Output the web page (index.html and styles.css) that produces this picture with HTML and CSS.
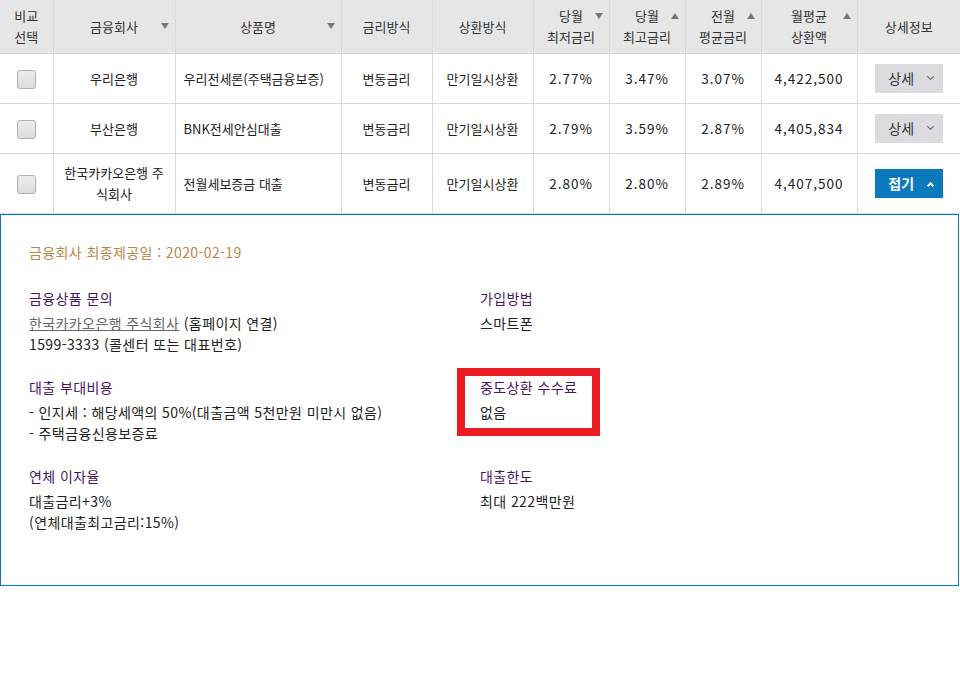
FILE: index.html
```html
<!DOCTYPE html>
<html lang="ko">
<head>
<meta charset="utf-8">
<title>대출 상품 비교</title>
<link rel="stylesheet" href="styles.css">
</head>
<body>
<table class="grid">
  <colgroup>
    <col style="width:53px"><col style="width:122px"><col style="width:166px"><col style="width:91px"><col style="width:101px"><col style="width:76px"><col style="width:76px"><col style="width:76px"><col style="width:96px"><col style="width:103px">
  </colgroup>
  <thead>
    <tr>
      <th>비교<br>선택</th>
      <th class="sortable">금융회사<span class="sort down one"></span></th>
      <th class="sortable">상품명<span class="sort down one"></span></th>
      <th>금리방식</th>
      <th>상환방식</th>
      <th class="sortable">당월<br>최저금리<span class="sort down two"></span></th>
      <th class="sortable">당월<br>최고금리<span class="sort up two"></span></th>
      <th class="sortable">전월<br>평균금리<span class="sort up two"></span></th>
      <th class="sortable">월평균<br>상환액<span class="sort up two"></span></th>
      <th>상세정보</th>
    </tr>
  </thead>
  <tbody>
    <tr class="r1">
      <td><span class="check"></span></td>
      <td>우리은행</td>
      <td class="left">우리전세론(주택금융보증)</td>
      <td>변동금리</td>
      <td>만기일시상환</td>
      <td class="num">2.77%</td>
      <td class="num">3.47%</td>
      <td class="num">3.07%</td>
      <td class="num">4,422,500</td>
      <td><span class="btn">상세<span class="chev"></span></span></td>
    </tr>
    <tr class="r1">
      <td><span class="check"></span></td>
      <td>부산은행</td>
      <td class="left">BNK전세안심대출</td>
      <td>변동금리</td>
      <td>만기일시상환</td>
      <td class="num">2.79%</td>
      <td class="num">3.59%</td>
      <td class="num">2.87%</td>
      <td class="num">4,405,834</td>
      <td><span class="btn">상세<span class="chev"></span></span></td>
    </tr>
    <tr class="r3">
      <td><span class="check"></span></td>
      <td class="wrap">한국카카오은행 주식회사</td>
      <td class="left">전월세보증금 대출</td>
      <td>변동금리</td>
      <td>만기일시상환</td>
      <td class="num">2.80%</td>
      <td class="num">2.80%</td>
      <td class="num">2.89%</td>
      <td class="num">4,407,500</td>
      <td><span class="btn open">접기<span class="chev up"></span></span></td>
    </tr>
  </tbody>
</table>
<div class="detail">
  <p class="date">금융회사 최종제공일 : 2020-02-19</p>
  <div class="info">
    <div class="item">
      <h4>금융상품 문의</h4>
      <p><a class="link">한국카카오은행 주식회사</a> (홈페이지 연결)<br>1599-3333 (콜센터 또는 대표번호)</p>
    </div>
    <div class="item">
      <h4>가입방법</h4>
      <p>스마트폰</p>
    </div>
    <div class="item">
      <h4>대출 부대비용</h4>
      <p>- 인지세 : 해당세액의 50%(대출금액 5천만원 미만시 없음)<br>- 주택금융신용보증료</p>
    </div>
    <div class="item marked">
      <h4>중도상환 수수료</h4>
      <p>없음</p>
      <span class="highlight"></span>
    </div>
    <div class="item">
      <h4>연체 이자율</h4>
      <p>대출금리+3%<br>(연체대출최고금리:15%)</p>
    </div>
    <div class="item">
      <h4>대출한도</h4>
      <p>최대 222백만원</p>
    </div>
  </div>
</div>
</body>
</html>
```
FILE: styles.css
```css
* { box-sizing: border-box; }
html, body { margin: 0; padding: 0; background: #fff; }
body {
  font-family: "Noto Sans CJK KR", "Malgun Gothic", "Noto Sans", sans-serif;
  font-size: 13px;
  color: #222;
  width: 960px;
}
.grid {
  width: 960px;
  table-layout: fixed;
  border-collapse: collapse;
}
.grid th, .grid td {
  border: 1px solid #d9d9d9;
  text-align: center;
  vertical-align: middle;
  padding: 0 4px;
  line-height: 21px;
}
.grid tr > :first-child { border-left: none; }
.grid tr > :last-child { border-right: none; }
.grid thead th {
  border-top: none;
  background: #e6e6e6;
  color: #333;
  font-weight: normal;
  height: 53px;
  position: relative;
}
.grid .r1 td { height: 50px; }
.grid .r3 td { height: 60px; }
.grid td.left { text-align: left; padding-left: 8px; }
.grid td.wrap { padding: 0 10px; }
.grid td.num { letter-spacing: 1px; font-size: 13.5px; }
.sort {
  position: absolute;
  right: 6px;
  width: 0; height: 0;
  border-left: 4px solid transparent;
  border-right: 4px solid transparent;
}
.sort.down { border-top: 6px solid #777; }
.sort.up { border-bottom: 6px solid #777; }
.sort.one { top: 23px; }
.sort.two { top: 13px; }
.check {
  display: inline-block;
  width: 19px; height: 19px;
  border: 1px solid #b0b0b0;
  border-radius: 3px;
  background: linear-gradient(#ececec, #dcdcdc);
  vertical-align: middle;
}
.btn {
  display: inline-flex;
  align-items: center;
  justify-content: center;
  gap: 14px;
  width: 68px;
  height: 29px;
  background: #dcdce0;
  color: #333;
  font-size: 14px;
  padding-left: 4px;
}
.btn.open { background: #0a7abd; color: #fff; font-weight: bold; }
.chev {
  width: 5px; height: 5px;
  border-right: 1px solid #666;
  border-bottom: 1px solid #666;
  transform: translateY(-2px) rotate(45deg);
}
.chev.up {
  border-color: #fff;
  border-width: 2px;
  transform: translateY(2px) rotate(-135deg);
}
.detail {
  border: 1px solid #0b7bc1;
  width: 959px;
  padding: 26px 28px 50px;
  height: 372px;
  font-size: 14px;
  letter-spacing: 0.4px;
}
.detail p { margin: 0; }
.date {
  color: #b8874a;
  font-size: 14px;
  line-height: 22px;
  margin-bottom: 24px !important;
}
.info {
  display: grid;
  grid-template-columns: 451px 1fr;
  row-gap: 21px;
}
.item { position: relative; }
.item h4 {
  margin: 0 0 4px;
  font-weight: normal;
  font-size: 14px;
  line-height: 22px;
  color: #4a1560;
}
.item p { line-height: 21px; color: #222; }
.link { color: #666; text-decoration: underline; }
.highlight {
  position: absolute;
  left: -23px;
  top: -8px;
  width: 143px;
  height: 68px;
  border: 8px solid #ec1c24;
}
```
